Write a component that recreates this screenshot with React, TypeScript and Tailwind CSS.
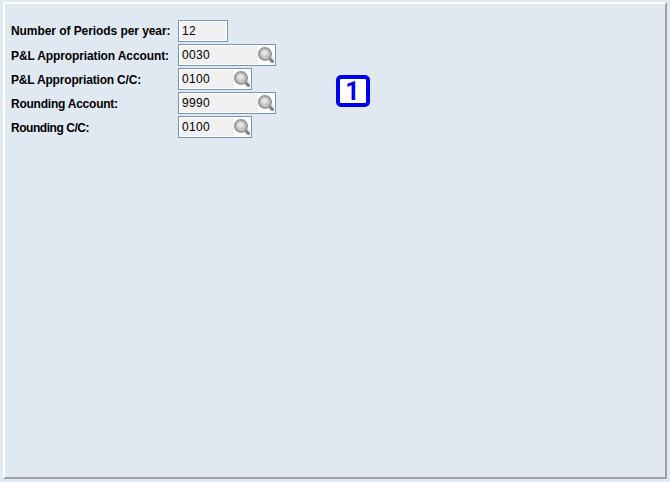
const rows = [
  { label: "Number of Periods per year:", value: "12", width: "w-[50px]", inner: "w-[44px]", search: false, labelClass: "tracking-[-0.07px]" },
  { label: "P&L Appropriation Account:", value: "0030", width: "w-[98px]", inner: "w-[77px]", search: true, labelClass: "tracking-[-0.115px] pt-[2px]" },
  { label: "P&L Appropriation C/C:", value: "0100", width: "w-[74px]", inner: "w-[53px]", search: true, labelClass: "tracking-[-0.18px] pt-[2px]" },
  { label: "Rounding Account:", value: "9990", width: "w-[98px]", inner: "w-[77px]", search: true, labelClass: "tracking-[-0.235px] pt-[2px]" },
  { label: "Rounding C/C:", value: "0100", width: "w-[74px]", inner: "w-[53px]", search: true, labelClass: "tracking-[-0.45px] pt-[2px]" },
];

function Lens() {
  return (
    <svg width="16" height="16" viewBox="0 0 16 16" className="shrink-0">
      <path d="M11 11 L14.5 14.5" stroke="#858585" strokeWidth="3.2" strokeLinecap="round" />
      <circle cx="7" cy="7" r="6" fill="#c8caca" stroke="#9c9e9e" strokeWidth="2.2" />
      <circle cx="6.5" cy="6" r="2.8" fill="#e0e2e2" />
    </svg>
  );
}

export default function App() {
  return (
    <div className="w-[670px] h-[482px] bg-[#e0e8f2] pt-[2px] pl-[3px] pr-[3px] pb-[3px] font-['Liberation_Sans',sans-serif]">
      <div className="w-full h-full border-2 border-t-white border-l-white border-r-[#a0a0a0] border-b-[#a0a0a0] pt-[16px] pl-[6px] relative">
        <div className="flex flex-col gap-[2px]">
          {rows.map((r) => (
            <div key={r.label} className="flex items-center h-[22px]">
              <div className={`w-[167px] text-[12px] font-bold text-black whitespace-nowrap ${r.labelClass}`}>{r.label}</div>
              <div className={`${r.width} h-[22px] border border-[#7496b8] bg-white flex items-center pl-[2px]`}>
                <div className={`${r.inner} h-[18px] bg-[#f0f0f0] pl-[1px] text-[12px] leading-[18px] tracking-[0.33px] text-black`}>{r.value}</div>
                {r.search && <Lens />}
              </div>
            </div>
          ))}
        </div>
        <div className="absolute left-[331px] top-[71px] w-[34px] h-[32px] border-[4px] border-[#0000f0] rounded-[5px] bg-white flex items-center justify-center font-['Roboto',sans-serif] font-bold text-[25px] leading-none text-[#0000f0] pr-[1px]">
          1
        </div>
      </div>
    </div>
  );
}
